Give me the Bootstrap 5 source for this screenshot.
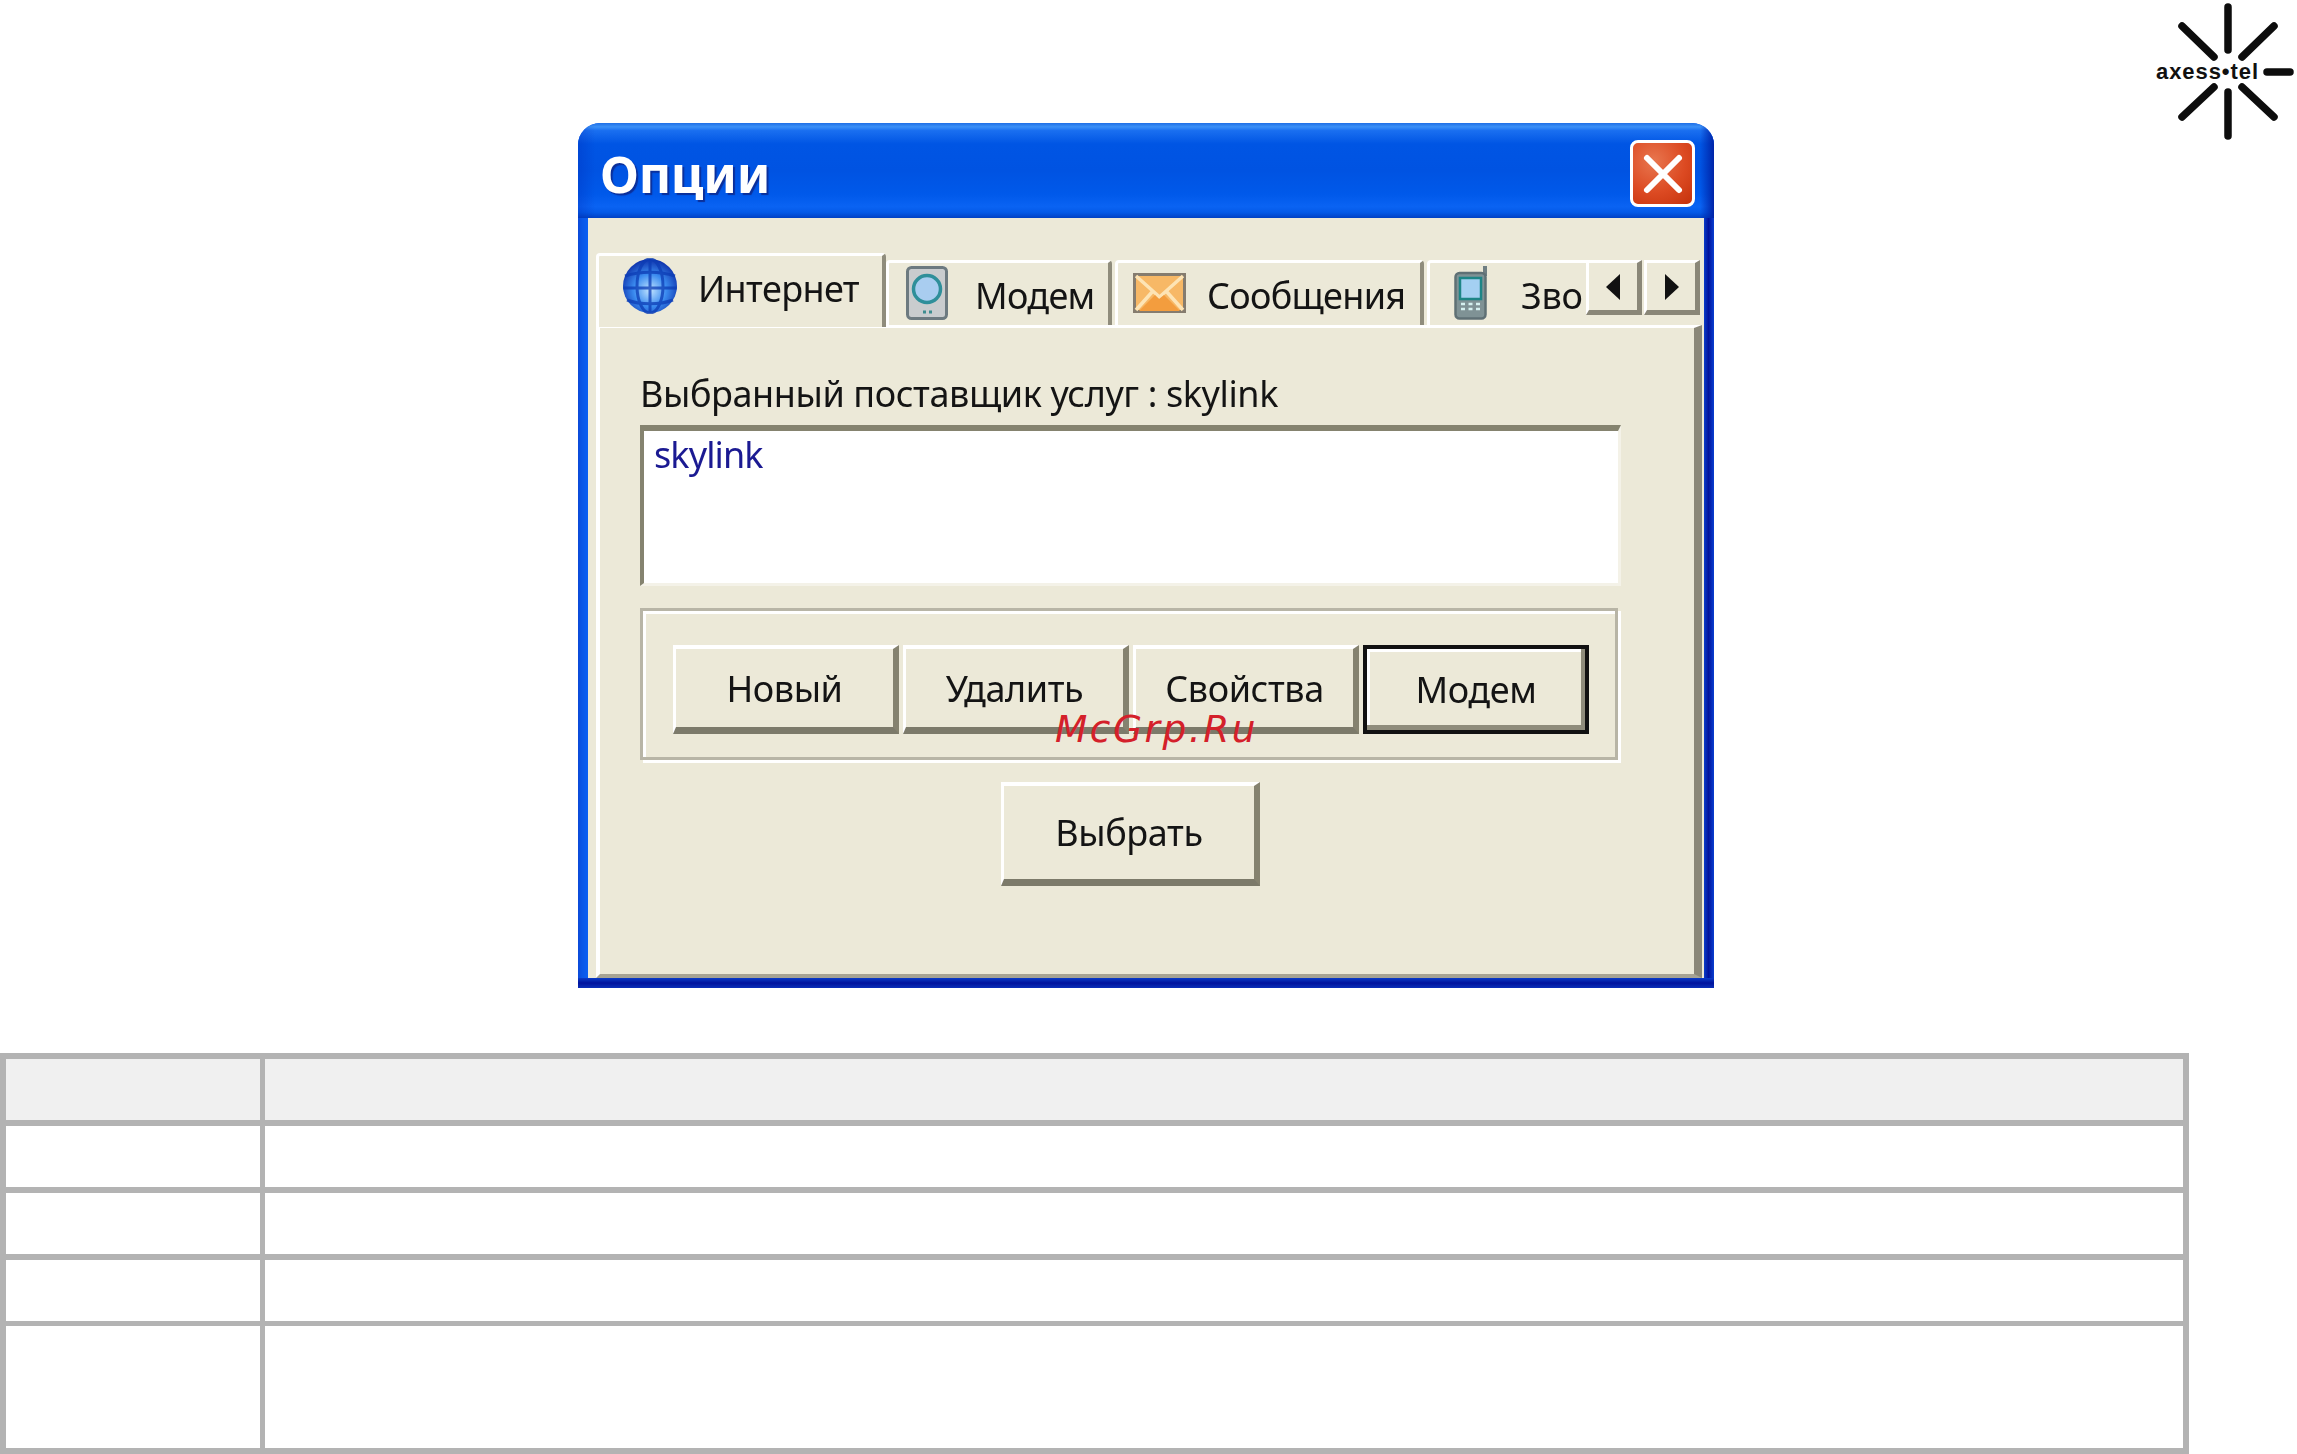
<!DOCTYPE html>
<html lang="ru">
<head>
<meta charset="utf-8">
<title>Опции</title>
<link href="https://cdn.jsdelivr.net/npm/bootstrap@5.3.0/dist/css/bootstrap.min.css" rel="stylesheet">
<style>
html,body{height:1454px;overflow:hidden;background:#fff}
body{font-family:"Noto Sans","Liberation Sans",sans-serif;color:#141414}
.page-flow{padding-top:123px}
.logo-mark{top:0;right:0;width:157px;height:150px}
.logo-text{font-family:"Liberation Sans",sans-serif;font-weight:700;font-size:22px;fill:#111}
.stamp{left:1055px;top:705px;font-family:"DejaVu Sans",sans-serif;font-style:italic;font-size:37.5px;letter-spacing:2.5px;line-height:48px;color:#d4202a;white-space:nowrap}
.xp-window{margin-left:578px;width:1136px;height:865px;border-radius:22px 22px 0 0;overflow:hidden;background:#0a5cef;filter:blur(.7px)}
.xp-title{height:95px;padding:6px 19px 0 22px;background:linear-gradient(90deg,rgba(0,30,170,.25) 0,rgba(0,30,170,0) 1.5%,rgba(0,24,160,0) 98.8%,#0024a8 100%),linear-gradient(180deg,#1f6fe6 0,#3b90f7 4%,#1a6ff0 8%,#0055e4 22%,#0053e2 50%,#0059ea 75%,#0a63f3 88%,#045ae8 94%,#0041c4 100%)}
.xp-title-text{font-weight:700;font-size:50px;line-height:70px;color:#fff;text-shadow:2px 2px 1px #0b2f9a;letter-spacing:-.2px}
.xp-close{width:65px;height:67px;padding:0;border:3px solid #fff;border-radius:8px;background:radial-gradient(circle at 35% 30%,#e8764f 0,#dc4a22 55%,#c4310c 100%)}
.xp-frame{height:770px;padding:0 10px 10px;background-color:#0a3fd0;background-repeat:no-repeat;background-image:linear-gradient(180deg,#0a3cc8,#00129c 50%,#0a2fb8),linear-gradient(90deg,#0b48d8,#0a55e4 30%,#0b60f4),linear-gradient(90deg,#0a3cc8,#00129c 45%,#0a3fd0);background-size:100% 10px,10px 100%,10px 100%;background-position:left bottom,left top,right top}
.xp-client{height:760px;background:#ece9d8;padding:35px 2px 0 8px}
.tab-strip{height:72px;position:relative;z-index:1}
.tab-item{display:flex;align-items:center;height:65px;background:#ece9d8;border-top:3px solid #fff;border-left:3px solid #fff;border-right:4px solid #8f8c7c;border-radius:4px 4px 0 0;font-size:36px;line-height:44px;white-space:nowrap;overflow:hidden;padding-top:4px;flex:none}
.tab-item svg{margin-top:-6px}
.tab-on{height:74px;width:290px;padding-left:23px;padding-top:0;align-self:flex-start;margin-bottom:-2px}
.tab-on svg{margin-top:-12px}
.tab-b{width:226px;padding-left:17px}
.tab-c{width:309px;margin-left:3px;padding-left:15px}
.tab-d{width:159px;margin-left:3px;padding-left:24px;border-right:0;border-radius:4px 0 0 0}
.tab-on span{margin-left:20px;margin-top:-6px;letter-spacing:-.6px}
.tab-b span{margin-left:27px;letter-spacing:-.7px}
.tab-c span{margin-left:21px;letter-spacing:-.7px}
.tab-d span{margin-left:33px;letter-spacing:-.3px}
.scroll-pair{position:absolute;left:990px;top:7px;gap:2px}
.scroll-btn{width:56px;height:55px;padding:0;border-radius:0;background:#ece9d8;border-style:solid;border-width:3px 5px 5px 3px;border-color:#fff #8a8778 #8a8778 #fff}
.xp-panel{height:653px;background:#ece9d8;border-style:solid;border-width:3px 8px 4px 4px;border-color:#fff #8a8778 #a6a394 #fff;padding:44px 0 0 40px}
.panel-body{width:981px}
.field-label{font-size:36px;line-height:44px;letter-spacing:-.4px;white-space:nowrap}
.provider-list{height:161px;margin-top:9px;border-radius:0;background:#fff;border-style:solid;border-width:6px 3px 3px 4px;border-color:#85836f #f4f2e8 #f4f2e8 #85836f}
.provider-item{border:0;background:transparent;padding:2px 10px;font-size:36px;line-height:44px;letter-spacing:-.9px;color:#1b1a92}
.etched{height:152px;margin:22px 3px 0 0;border:3px solid #b8b5a6;box-shadow:inset 3px 3px 0 #fff,3px 3px 0 #fff;padding:34px 0 0 30px;gap:4px}
.xp-btn{width:226px;height:89px;padding:0;border-radius:0;background:#ece9d8;color:#141414;font-size:36px;letter-spacing:-.4px;border-style:solid;border-width:4px 6px 7px 3px;border-color:#fff #85826f #7c7a6a #fff}
.xp-btn:hover{background:#ece9d8;color:#141414;border-color:#fff #85826f #7c7a6a #fff}
.xp-lower{padding-top:2px}
.xp-default{border:4px solid #111;box-shadow:inset -4px -5px 0 #8f8c7b,inset 3px 3px 0 #fff}
.xp-default:hover{border-color:#111}
.xp-choose{width:259px;height:104px;margin-top:22px}
.sheet{width:2189px;margin:65px 0 0;border-collapse:separate;border-spacing:0;table-layout:fixed;border:6px solid #b3b3b3;--bs-table-bg:transparent}
.sheet td,.sheet th{padding:0;height:67px;border-style:solid;border-color:#b3b3b3;border-width:0 5px 6px 0;background:#fff;box-shadow:none}
.sheet th{background:#f0f0f0}
.sheet td:last-child,.sheet th:last-child{border-right-width:0}
.sheet tr:nth-child(3) td{height:66px;border-bottom-width:5px}
.sheet tr:last-child td{height:122px;border-bottom-width:0}
.col-first{width:259px}
</style>
</head>
<body>
<svg class="logo-mark position-absolute" viewBox="0 0 157 150" aria-label="axess tel">
  <g stroke="#0d0d0d" stroke-width="7.5" stroke-linecap="round" fill="none">
    <path d="M88 7V50M88 92V136M127 72H150"/>
    <path d="M42 26 74 57M134 26 102 57M42 117 74 87M134 117 102 87"/>
  </g>
  <text class="logo-text" x="16" y="79" textLength="102" lengthAdjust="spacing">axess•tel</text>
</svg>

<div class="page-flow">
  <div class="xp-window">
    <div class="xp-title d-flex align-items-center justify-content-between">
      <span class="xp-title-text">Опции</span>
      <button class="xp-close btn d-flex align-items-center justify-content-center" type="button" aria-label="Закрыть">
        <svg width="42" height="42" viewBox="0 0 42 42"><path d="M5 5 37 37M37 5 5 37" stroke="#fff" stroke-width="6" stroke-linecap="round"/></svg>
      </button>
    </div>
    <div class="xp-frame">
      <div class="xp-client">
        <div class="tab-strip d-flex align-items-end">
          <div class="tab-item tab-on">
            <svg width="56" height="56" viewBox="0 0 56 56">
              <defs><radialGradient id="gl" cx=".5" cy=".58" r=".6"><stop offset="0" stop-color="#c4e6ff"/><stop offset=".5" stop-color="#3b8cf0"/><stop offset="1" stop-color="#0a2aa6"/></radialGradient></defs>
              <circle cx="28" cy="28" r="27" fill="url(#gl)"/>
              <g stroke="#0c3cb4" stroke-width="3" fill="none" opacity=".75"><path d="M3 18C18 13 38 13 53 18M1 30H55M5 42C18 47 38 47 51 42"/><ellipse cx="28" cy="28" rx="13" ry="27"/><path d="M28 1V55"/></g>
            </svg>
            <span>Интернет</span>
          </div>
          <div class="tab-item tab-b">
            <svg width="42" height="54" viewBox="0 0 42 54"><rect x="1.500" y="1.500" width="39" height="51" rx="4" fill="#c9ccce" stroke="#6d7a80" stroke-width="3"/><circle cx="21" cy="23" r="13.500" fill="#a9cdf0" stroke="#2f8f9a" stroke-width="3.500"/><path d="M17 46h3M23 46h3" stroke="#3d8c8f" stroke-width="3"/></svg>
            <span>Модем</span>
          </div>
          <div class="tab-item tab-c">
            <svg width="53" height="40" viewBox="0 0 53 40"><rect x="1.500" y="1.500" width="50" height="37" fill="#f7b866" stroke="#857c6f" stroke-width="3"/><path d="M3 3 26.500 24 50 3M3 37 20 18M50 37 33 18" fill="none" stroke="#fde4b5" stroke-width="3.500"/><path d="M6 38 22 22 26 26 31 22 47 38z" fill="#f39d3e"/></svg>
            <span>Сообщения</span>
          </div>
          <div class="tab-item tab-d">
            <svg width="34" height="54" viewBox="0 0 34 54"><path d="M29 0h4v10h-4z" fill="#6f7e82"/><rect x="1.500" y="7" width="30" height="45.500" rx="4" fill="#7f9295" stroke="#5f7075" stroke-width="2.500"/><rect x="6" y="12" width="21" height="21" fill="#a4d0f2" stroke="#1d8586" stroke-width="2.500"/><path d="M7 38h4M14.500 38h4M22 38h4M7 43h4M14.500 43h4M22 43h4" stroke="#d5f0ef" stroke-width="2.600"/></svg>
            <span>Зво</span>
          </div>
          <div class="scroll-pair d-flex">
            <button class="scroll-btn btn d-flex align-items-center justify-content-center" type="button" aria-label="Назад"><svg width="15" height="26" viewBox="0 0 15 26"><path d="M14 0V26L0 13z" fill="#111"/></svg></button>
            <button class="scroll-btn btn d-flex align-items-center justify-content-center" type="button" aria-label="Вперёд"><svg width="15" height="26" viewBox="0 0 15 26"><path d="M1 0V26L15 13z" fill="#111"/></svg></button>
          </div>
        </div>
        <div class="xp-panel">
          <div class="panel-body">
            <div class="field-label">Выбранный поставщик услуг : skylink</div>
            <ul class="provider-list list-group">
              <li class="provider-item list-group-item">skylink</li>
            </ul>
            <div class="etched d-flex align-items-start">
              <button class="xp-btn xp-lower btn" type="button">Новый</button>
              <button class="xp-btn xp-lower btn" type="button">Удалить</button>
              <button class="xp-btn xp-lower btn" type="button">Свойства</button>
              <button class="xp-btn xp-default btn" type="button">Модем</button>
            </div>
            <div class="d-flex justify-content-center">
              <button class="xp-btn xp-choose btn" type="button">Выбрать</button>
            </div>
          </div>
        </div>
      </div>
    </div>
  </div>

  <table class="sheet table">
    <colgroup><col class="col-first"><col></colgroup>
    <thead><tr><th></th><th></th></tr></thead>
    <tbody>
      <tr><td></td><td></td></tr>
      <tr><td></td><td></td></tr>
      <tr><td></td><td></td></tr>
      <tr><td></td><td></td></tr>
    </tbody>
  </table>
</div>

<div class="stamp position-absolute">McGrp.Ru</div>
<script src="https://cdn.jsdelivr.net/npm/bootstrap@5.3.0/dist/js/bootstrap.bundle.min.js"></script>
</body>
</html>
